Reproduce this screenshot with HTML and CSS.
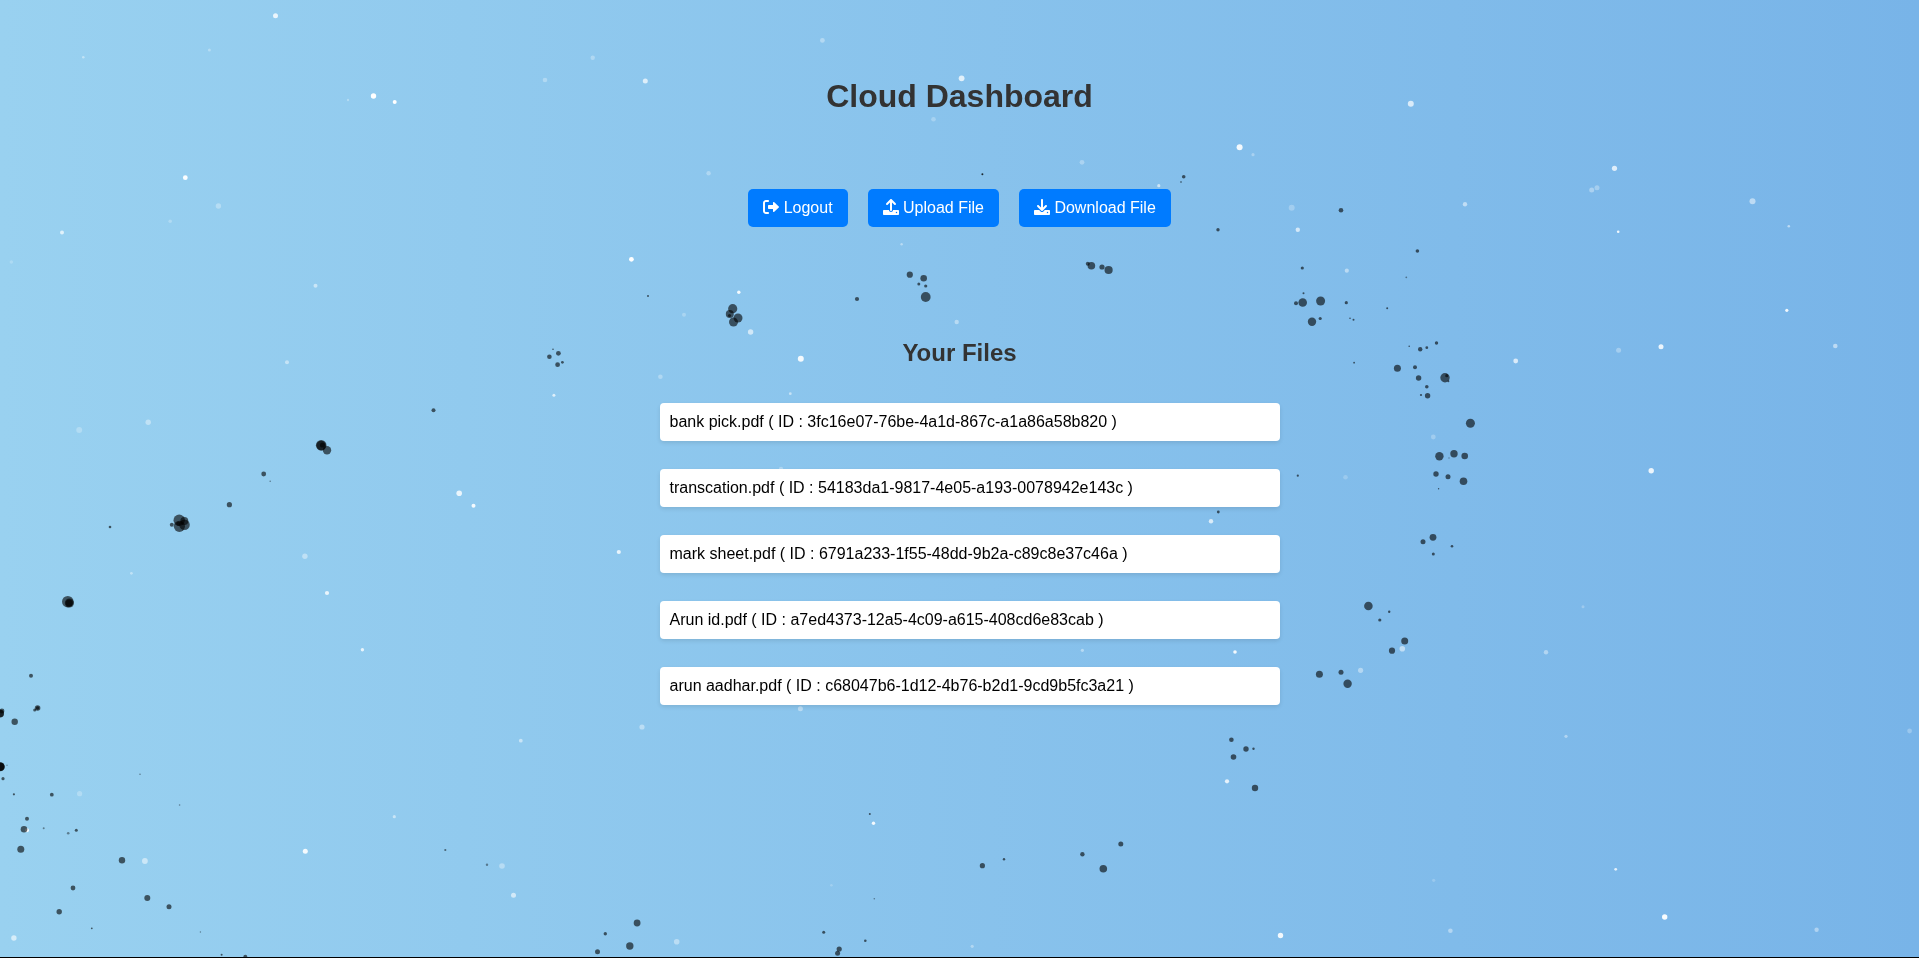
FILE: index.html
```html
<!DOCTYPE html>
<html lang="en">
<head>
<meta charset="utf-8">
<title>Cloud Dashboard</title>
<link rel="stylesheet" href="styles.css">
</head>
<body>
<canvas class="sky" aria-hidden="true"></canvas>
<main class="dashboard">
  <h1 class="title">Cloud Dashboard</h1>
  <div class="actions">
    <button class="btn" type="button"><svg class="icon" viewBox="0 0 512 512" aria-hidden="true"><path d="M96 480h64c17.67 0 32-14.33 32-32s-14.33-32-32-32H96c-17.67 0-32-14.33-32-32V128c0-17.67 14.33-32 32-32h64C177.7 96 192 81.67 192 64S177.7 32 160 32H96C42.98 32 0 74.98 0 128v256C0 437 42.98 480 96 480zM504.8 238.5l-144.1-136c-6.975-6.578-17.2-8.375-26-4.594c-8.803 3.797-14.51 12.47-14.51 22.05l-.0918 72l-128-.001c-17.69 0-32.02 14.33-32.02 32v64c0 17.67 14.34 32 32.02 32l128 .001l.0918 71.1c0 9.578 5.707 18.25 14.51 22.05c8.803 3.781 19.03 1.984 26-4.594l144.1-136C514.4 264.4 514.4 247.6 504.8 238.5z"/></svg> Logout</button>
    <button class="btn" type="button"><svg class="icon" viewBox="0 0 512 512" aria-hidden="true"><path d="M105.4 182.6c12.5 12.49 32.76 12.5 45.25 .001L224 109.3V352c0 17.67 14.33 32 32 32c17.67 0 32-14.33 32-32V109.3l73.38 73.38c12.49 12.49 32.75 12.49 45.25-.001c12.49-12.49 12.49-32.75 0-45.25l-128-128C272.4 3.125 264.2 0 256 0S239.6 3.125 233.4 9.375L105.4 137.4C92.88 149.9 92.88 170.1 105.4 182.6zM480 352h-160c0 35.35-28.65 64-64 64s-64-28.65-64-64H32c-17.67 0-32 14.33-32 32v96c0 17.67 14.33 32 32 32h448c17.67 0 32-14.33 32-32v-96C512 366.3 497.7 352 480 352zM432 456c-13.2 0-24-10.8-24-24c0-13.2 10.8-24 24-24s24 10.8 24 24C456 445.2 445.2 456 432 456z"/></svg> Upload File</button>
    <button class="btn" type="button"><svg class="icon" viewBox="0 0 512 512" aria-hidden="true"><path d="M480 352h-133.5l-45.25 45.25C289.2 409.3 273.1 416 256 416s-33.16-6.656-45.25-18.75L165.5 352H32c-17.67 0-32 14.33-32 32v96c0 17.67 14.33 32 32 32h448c17.67 0 32-14.33 32-32v-96C512 366.3 497.7 352 480 352zM432 456c-13.2 0-24-10.8-24-24c0-13.2 10.8-24 24-24s24 10.8 24 24C456 445.2 445.2 456 432 456zM233.4 374.6C239.6 380.9 247.8 384 256 384s16.38-3.125 22.62-9.375l128-128c12.49-12.5 12.49-32.75 0-45.25c-12.5-12.5-32.76-12.5-45.25 0L288 274.8V32c0-17.67-14.33-32-32-32C238.3 0 224 14.33 224 32v242.8L150.6 201.4c-12.49-12.5-32.75-12.5-45.25 0c-12.49 12.5-12.49 32.75 0 45.25L233.4 374.6z"/></svg> Download File</button>
  </div>
  <h2 class="subtitle">Your Files</h2>
  <ul class="files">
    <li class="file">bank pick.pdf ( ID : 3fc16e07-76be-4a1d-867c-a1a86a58b820 )</li>
    <li class="file">transcation.pdf ( ID : 54183da1-9817-4e05-a193-0078942e143c )</li>
    <li class="file">mark sheet.pdf ( ID : 6791a233-1f55-48dd-9b2a-c89c8e37c46a )</li>
    <li class="file">Arun id.pdf ( ID : a7ed4373-12a5-4c09-a615-408cd6e83cab )</li>
    <li class="file">arun aadhar.pdf ( ID : c68047b6-1d12-4b76-b2d1-9cd9b5fc3a21 )</li>
  </ul>
</main>
<script src="particles.js"></script>
</body>
</html>
```
FILE: styles.css
```css
body {
  margin: 0;
  min-height: 100vh;
  box-sizing: border-box;
  border-bottom: 1px solid #000;
  background: linear-gradient(to right, #99d1f0, #78b4e8);
  font-family: Arial, "Liberation Sans", sans-serif;
  font-size: 16px;
}

.sky {
  position: fixed;
  inset: 0;
  width: 100%;
  height: calc(100% - 1px);
  z-index: -1;
}

.dashboard {
  display: flex;
  flex-direction: column;
  align-items: center;
  padding: 78px 20px 40px;
}

.title,
.subtitle {
  margin: 0;
  color: #333;
  font-weight: bold;
}

.title {
  font-size: 32px;
  line-height: 36px;
}

.subtitle {
  font-size: 24px;
  line-height: 28px;
}

.actions {
  display: flex;
  flex-wrap: wrap;
  justify-content: center;
  gap: 20px;
  margin: 75px 0 112px;
}

.btn {
  padding: 10px 15px;
  border: 0;
  border-radius: 5px;
  background: #007bff;
  color: #fff;
  font: inherit;
  line-height: 18px;
  cursor: pointer;
}

.icon {
  width: 16px;
  height: 16px;
  fill: currentColor;
  vertical-align: -2px;
}

.files {
  display: flex;
  flex-direction: column;
  gap: 28px;
  box-sizing: border-box;
  width: 100%;
  max-width: 640px;
  margin: 36px 0 0;
  padding: 0 0 0 20px;
  list-style: none;
}

.file {
  padding: 10px;
  border-radius: 4px;
  background: #fff;
  box-shadow: 0 2px 4px rgba(0, 0, 0, 0.1);
  color: #000;
  line-height: 18px;
}
```
FILE: particles.js
```js
// Each particle: x, y, radius, opacity (dark ones default to 0.6).
const FIELD = { width: 1919, height: 957 };

const light = [
  [275.5,15.7,2.5,.8],[83.3,57.3,1.3,.4],[209.4,50,1.5,.3],[348,100,1.2,.3],[373.5,96,2.7,1],
  [394.7,102,2,1],[545,80,2.3,.3],[592.7,57.7,2.2,.3],[185.3,177.7,2.4,.95],[218.4,206,2.7,.3],
  [170.2,221.3,1.8,.25],[62,232.6,2,.7],[11.4,262,1.8,.2],[315.5,285.7,2,.5],[631.4,259.3,2.4,1],
  [287,362.3,2,.45],[79.2,430,3,.25],[148.2,422.3,2.7,.4],[553.9,395.3,1.5,.7],[459.2,493.3,2.8,.8],
  [473.5,505.7,2,.9],[618.8,552,2.1,.8],[304.9,556.3,2.7,.4],[131.4,573.3,1.4,.4],[327,593,2.1,.8],
  [362.4,649.7,1.7,.8],[520.8,740.7,1.9,.5],[79.6,793.7,2.6,.25],[394.3,816.7,1.6,.5],[305.3,851.3,2.5,.9],
  [144.9,861,2.9,.5],[502,866,2.8,.35],[513.5,895.3,2.5,.6],[13.9,938,2.7,.6],[27,830.3,2,.9],
  [1082.4,650.3,1.6,.4],[1235,652,1.8,.9],[800.4,708.7,2.5,.4],[642,727,2.6,.4],[1227,781.3,2.1,.8],
  [873.5,823.3,1.7,.9],[831.4,885.3,1.3,.2],[676.7,941.7,2.8,.4],[972.2,946.3,1.6,.35],[1280.5,935.5,2.7,.9],
  [645.3,81,2.5,.7],[961.6,78.3,2.9,.75],[933.5,119.3,2.3,.25],[708.6,173.3,2.2,.3],[1082,162.3,2.4,.3],
  [1239.6,147.3,3,.9],[1253,154.7,1.6,.3],[1158.8,185.7,1.6,.6],[901.6,244.3,1.2,.4],[738.8,292.3,1.7,.9],
  [684,314.7,2,.25],[750.6,332,2.7,.6],[956.7,322,2.2,.4],[800.8,358.7,3,.9],[660.4,376.7,2.3,.3],
  [822.4,40.4,2.4,.35],[790.3,393.7,1.4,.5],[781,469,2.2,.3],[1211,521.3,2.2,.7],
  [1410.8,103.7,3,.7],[1614.5,168.3,2.6,.75],[1591.7,190,2.5,.35],[1597,187.7,2.5,.3],[1465,204.3,2.2,.5],
  [1291.7,207.7,3,.25],[1297.8,229.7,2.2,.65],[1752.5,201.3,3,.5],[1618.2,231.7,1.3,.9],[1788.8,226.3,1.3,.5],
  [1346.8,270.7,2.1,.45],[1786.8,310.3,1.6,.9],[1618.6,350.3,2.5,.3],[1661,346.7,2.5,.85],[1835.3,346,2.3,.5],
  [1515.7,361,2.4,.7],[1433.3,437,2.4,.25],[1345.5,477.3,2.3,.2],[1651.2,470.7,2.7,.85],[1583,606.7,1.5,.25],
  [1402.3,648.7,2.8,.5],[1360.6,670.3,2.6,.4],[1546,652.3,2.2,.4],[1566,736.3,1.6,.4],[1909.6,731,2.4,.25],
  [1615.7,869.3,1.4,.8],[1433.7,880.3,1.6,.2],[1664.7,917,2.7,.95],[1450.4,930.7,2.3,.4],[1816.6,929.7,2.2,.4]
];

const dark = [
  [553,349.3,.8],[558.4,353.3,2.4],[549.4,356.7,2.3],[562.4,362.3,1.4],[557.6,364.7,2.4],[433.5,410.3,2],
  [321.2,445.3,5.3],[321.2,445.6,4.8],[322.5,445,2.6],[327,450.3,4.2],[263.7,474,2.4],[270.2,481.3,.8,.4],
  [229.4,504.7,2.6],[110,527,1.3],[179.2,520.3,5.7],[179.4,526.3,5.6],[184.5,524.7,5.3],[184.3,521,4],
  [171.8,524.7,2],[178.4,523.7,2.2],[67.8,601.7,5.8],[69.4,603,4.6],[69.2,603,3.6],
  [31,675.7,2],[37.6,708,2.8],[37.6,708,1.8],[34.7,710,1.5],[0,713.5,4],[0,713.5,3.8],[2,711,2.4],
  [14.7,721.7,3.2],[.3,766.7,4.5],[.3,766.7,4.3],[.3,766.7,4],[7,765.3,.8,.3],[3,778.7,1.6],
  [140,774.3,.8,.4],[13.9,794.3,1.1],[51.8,794.7,1.9],[179.6,805,.8,.4],[27,818.7,2],[24,829.3,3.3],
  [20.8,849.3,3.5],[43.7,828.3,1,.4],[68.2,833.3,1.3,.4],[76.3,830.3,1.5],[122,860.3,3.2],[73,888,2.4],
  [147.3,898,3],[59.2,911.7,2.7],[169,906.7,2.5],[91.8,928.3,.9],[200.4,932,.7,.4],[445.3,850,1.1,.5],
  [487,864.7,1.2,.4],[221.6,954.7,1],[245.3,956.7,2],[637.1,923,3.4],[605.3,933.7,1.7],[629.8,946,3.7],
  [597.5,951.7,2.5],[1231.4,739.7,2.3],[1246,749,2.7],[1253.5,748.7,1.2],[1233.5,757,2.8],[1255,788,3.2],
  [869.8,814,1],[982.4,865.7,2.6],[1004,859.3,1.2],[1082.4,854.3,2.2],[1120.8,844,2.5],[1103.3,868.7,3.8],
  [874.3,898.7,.8,.4],[823.7,932.3,1.5],[865.3,940.7,1.3],[839.2,949,2.6],[837.6,953.3,2.5],
  [982.4,174.3,1,.8],[1183.7,176.7,1.8],[1181,182,1,.4],[1218,229.7,1.7],[1087.8,263.7,2],[1091.4,265.7,3.8],
  [1102,267,2.6],[1108.6,270,4.1],[909.8,274.7,3.1],[923.7,278.3,3.3],[918.8,284,1.5],[925.7,286,1.6],
  [925.7,297,4.9],[648,296,1],[857,299,2.1],[732.7,308.7,4.6],[729.8,314,4],[729.5,315.5,1.6],[738,318,4.5],
  [733.5,322,4.5],[1218.3,512,1.4],[1297.8,475.7,1.1],[1341,210.3,2.3],[1417.4,251,1.8],[1302.3,268,1.6],
  [1406.3,277.3,.9,.4],[1303.5,293.3,1],[1296,303.3,2],[1302.7,302.5,4.3],[1320.6,301,4.5],[1346.3,302.7,1.6],
  [1387.2,308.3,1],[1312,321.8,4.2],[1320.2,318.5,1.6],[1350,318.3,.8],[1353.5,319.8,1],[1409.2,346.3,.8],
  [1420.2,349.3,2.2],[1426.8,347.7,1.4],[1436.5,343,1.7],[1354.1,362.7,.9],[1397.4,368.3,3.5],[1415,367.3,2],
  [1418.6,378,2.7],[1445,377.7,4.7],[1446.8,375.7,1.6],[1448.4,381.3,1],[1426.8,386.7,1.8],[1421,395,1.1],
  [1427.6,395.7,2.7],[1470.4,423.3,4.5],[1439.4,456.3,4.2],[1454,453.7,3.7],[1464.7,456,3.3],[1449,458,.8,.3],
  [1436,474,2.7],[1448,476.7,2.5],[1463.5,481.3,3.8],[1438.6,488.7,.7],[1423,541.7,2.5],[1433,537.3,3.4],
  [1452,546.3,1.3],[1433.3,554,1.5],[1368.4,606,4.3],[1389.2,611.7,1.2],[1379.8,620,1.6],[1404.7,641,3.5],
  [1392,650.7,3.1],[1319.4,674.3,3.5],[1341,672.3,2.5],[1347.6,683.7,4.2]
];

const canvas = document.querySelector(".sky");
const ctx = canvas.getContext("2d");

function dot(color, [x, y, r, opacity = 0.6]) {
  ctx.globalAlpha = opacity;
  ctx.fillStyle = color;
  ctx.beginPath();
  ctx.arc(x * canvas.width / FIELD.width, y * canvas.height / FIELD.height, r, 0, Math.PI * 2);
  ctx.fill();
}

function draw() {
  canvas.width = canvas.clientWidth;
  canvas.height = canvas.clientHeight;
  light.forEach(p => dot("#fff", p));
  dark.forEach(p => dot("#000", p));
}

window.addEventListener("resize", draw);
draw();
```
